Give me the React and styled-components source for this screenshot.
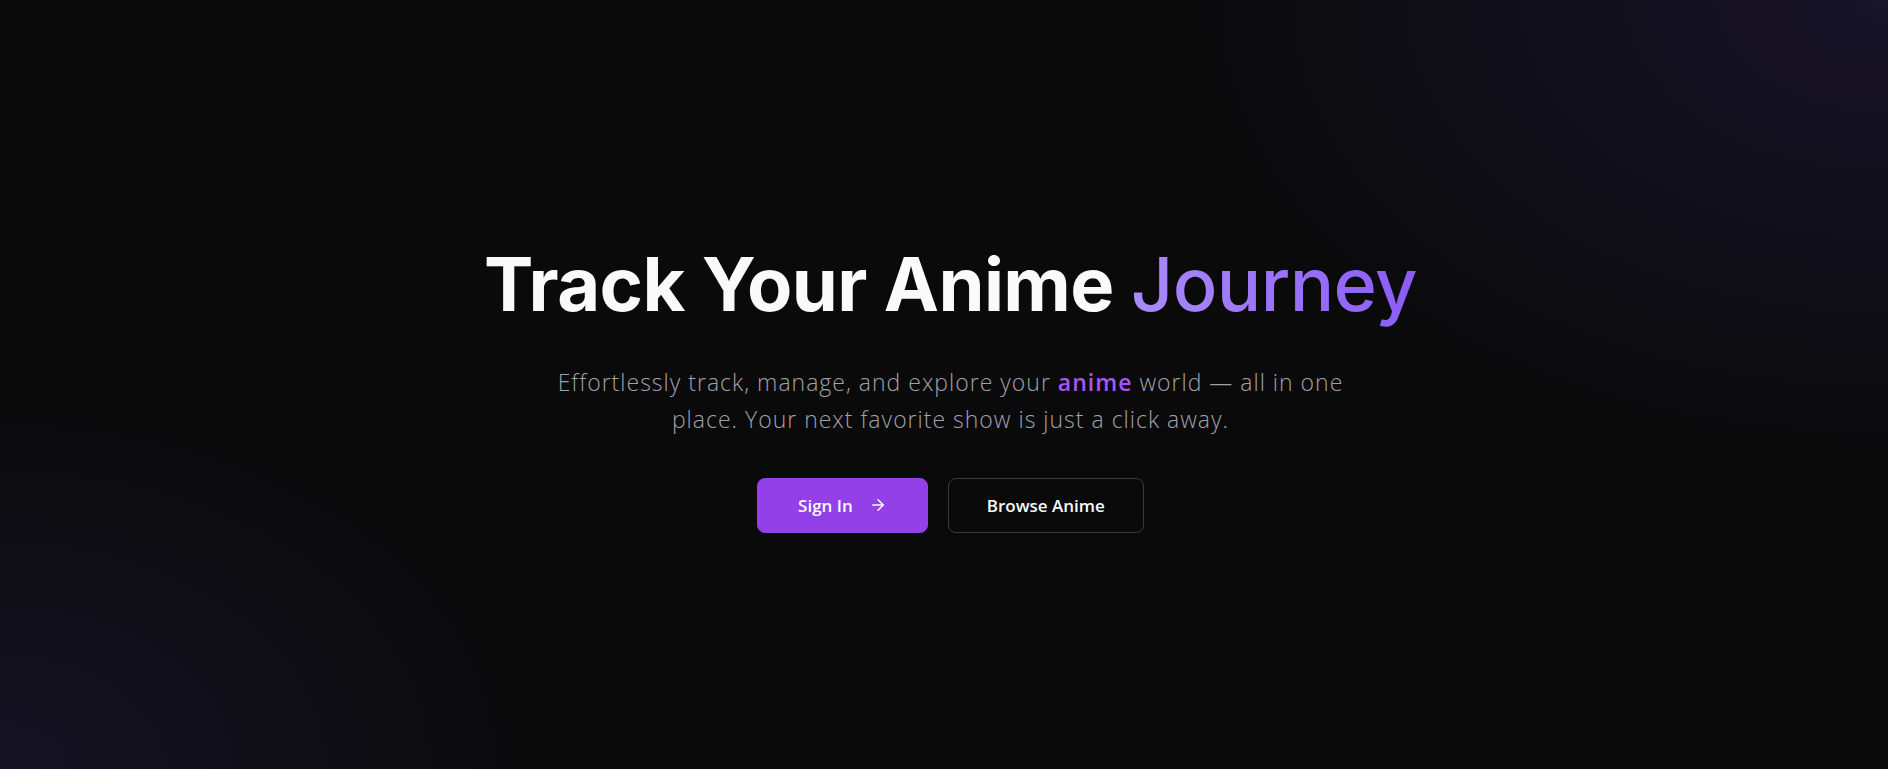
import React from "react";
import styled, { createGlobalStyle } from "styled-components";

const GlobalStyle = createGlobalStyle`
  html, body {
    margin: 0;
    padding: 0;
    background: #0a0a0b;
  }
  * {
    box-sizing: border-box;
  }
`;

/* dark page with faint violet glow in the corners */
const Page = styled.main`
  min-height: 100vh;
  display: flex;
  align-items: center;
  justify-content: center;
  background:
    radial-gradient(ellipse 1000px 650px at 100% 0%, rgba(36, 28, 66, 0.55), transparent 70%),
    radial-gradient(ellipse 750px 520px at 0% 100%, rgba(34, 28, 60, 0.5), transparent 70%),
    #0a0a0b;
`;

const Hero = styled.section`
  display: flex;
  flex-direction: column;
  align-items: center;
  text-align: center;
  padding: 6px 0 0 13px;
`;

const Title = styled.h1`
  margin: 0;
  font-family: "Inter", "Noto Sans", sans-serif;
  font-weight: 700;
  font-size: 74px;
  line-height: 1.15;
  letter-spacing: -0.6px;
  color: #fafafa;
`;

const Accent = styled.span`
  font-weight: 500;
  background: linear-gradient(90deg, #a98bfa 0%, #8b5cf6 100%);
  -webkit-background-clip: text;
  background-clip: text;
  color: transparent;
`;

const Subtitle = styled.p`
  margin: 36px 0 0;
  max-width: 820px;
  font-family: "Open Sans", "Lato", sans-serif;
  font-weight: 300;
  font-size: 23px;
  line-height: 37px;
  letter-spacing: 1px;
  color: #a1a1aa;
`;

const Highlight = styled.span`
  color: #a855f7;
  font-weight: 600;
`;

const Actions = styled.div`
  display: flex;
  gap: 20px;
  margin-top: 40px;
`;

const Button = styled.button`
  display: inline-flex;
  align-items: center;
  justify-content: center;
  gap: 16px;
  height: 55px;
  padding: 0 ${(props) => (props.$primary ? "40px" : "38px")};
  border-radius: 8px;
  border: 1px solid ${(props) => (props.$primary ? "#9340e8" : "#3a3a40")};
  background: ${(props) => (props.$primary ? "#9340e8" : "#0a0a0b")};
  color: #fafafa;
  font-family: "Open Sans", "Noto Sans", sans-serif;
  font-weight: 600;
  font-size: 17px;
  cursor: pointer;
`;

const Arrow = () => (
  <svg width="18" height="18" viewBox="0 0 24 24" fill="none" stroke="currentColor" strokeWidth="2" strokeLinecap="round" strokeLinejoin="round">
    <path d="M5 12h14" />
    <path d="m12 5 7 7-7 7" />
  </svg>
);

const App = () => {
  return (
    <>
      <GlobalStyle />
      <Page>
        <Hero>
          <Title>
            Track Your Anime <Accent>Journey</Accent>
          </Title>
          <Subtitle>
            Effortlessly track, manage, and explore your <Highlight>anime</Highlight> world — all in one place. Your next favorite show is just a click away.
          </Subtitle>
          <Actions>
            <Button $primary>
              Sign In <Arrow />
            </Button>
            <Button>Browse Anime</Button>
          </Actions>
        </Hero>
      </Page>
    </>
  );
};

export default App;
